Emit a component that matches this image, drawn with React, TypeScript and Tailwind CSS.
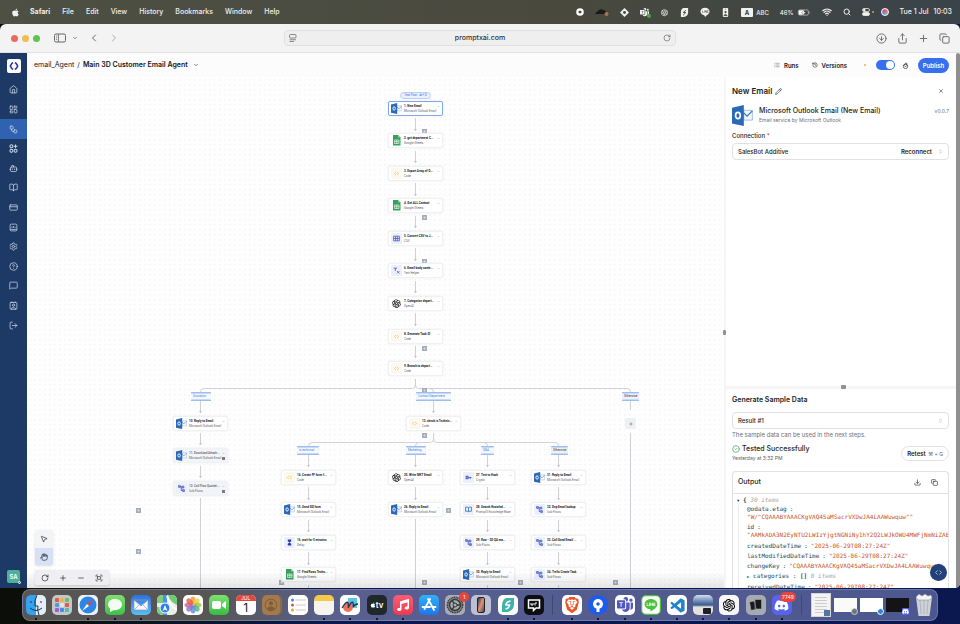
import type { ReactNode } from "react";
import {
  BookOpen,
  Bot,
  ChevronDown,
  ChevronLeft,
  ChevronRight,
  ChevronsUpDown,
  CircleArrowDown,
  CircleCheck,
  CircleHelp,
  Code,
  Contact,
  Copy,
  CreditCard,
  Download,
  Fullscreen,
  Hand,
  History,
  House,
  LayoutDashboard,
  List,
  LogOut,
  MessageSquare,
  Minus,
  MousePointer2,
  PanelLeft,
  Pencil,
  Plus,
  RotateCw,
  Search,
  Settings,
  Share,
  Wifi,
  Workflow,
  X,
} from "lucide-react";
import { FaApple, FaDiscord, FaLine, FaMusic } from "react-icons/fa";
import { FaBrave } from "react-icons/fa6";
import { AiOutlineOpenAI } from "react-icons/ai";
import { BsMicrosoftTeams } from "react-icons/bs";
import { BiLogoVisualStudio } from "react-icons/bi";

type IconKind =
  | "outlook"
  | "sheets"
  | "code"
  | "csv"
  | "text"
  | "openai"
  | "subflow"
  | "delay"
  | "crypto"
  | "book";

interface FlowNode {
  x: number;
  y: number;
  title: string;
  app: string;
  icon: IconKind;
  skipped?: boolean;
  selected?: boolean;
}

interface Branch {
  x: number;
  y: number;
  w: number;
  name: string;
  fallback?: boolean;
}

const OUTLOOK = "Microsoft Outlook Email";

const nodes: FlowNode[] = [
  { x: 361, y: 24, title: "1. New Email", app: OUTLOOK, icon: "outlook", selected: true },
  { x: 361, y: 56, title: "2. get department C...", app: "Google Sheets", icon: "sheets" },
  { x: 361, y: 89, title: "3. Export Array of D...", app: "Code", icon: "code" },
  { x: 361, y: 121, title: "4. Get ALL Contact", app: "Google Sheets", icon: "sheets" },
  { x: 361, y: 154, title: "5. Convert CSV to J...", app: "CSV", icon: "csv" },
  { x: 361, y: 186, title: "6. Email body conte...", app: "Text Helper", icon: "text" },
  { x: 361, y: 219, title: "7. Categorize depart...", app: "OpenAI", icon: "openai" },
  { x: 361, y: 252, title: "8. Generate Task ID", app: "Code", icon: "code" },
  { x: 361, y: 284, title: "9. Branch to depart...", app: "Code", icon: "code" },
  { x: 146, y: 339, title: "10. Reply to Email", app: OUTLOOK, icon: "outlook" },
  { x: 146, y: 371, title: "11. Download Attach...", app: OUTLOOK, icon: "outlook", skipped: true },
  { x: 146, y: 404, title: "12. Call Flow Quotati...", app: "Sub Flows", icon: "subflow", skipped: true },
  { x: 379, y: 339, title: "13. check is Technic...", app: "Code", icon: "code" },
  { x: 254, y: 393, title: "14. Create FF form f...", app: "Code", icon: "code" },
  { x: 254, y: 425, title: "15. Send GG form", app: OUTLOOK, icon: "outlook" },
  { x: 254, y: 458, title: "16. wait for 5 minutes", app: "Delay", icon: "delay" },
  { x: 254, y: 490, title: "17. Find Rows Techn...", app: "Google Sheets", icon: "sheets" },
  { x: 361, y: 393, title: "25. Write MKT Email", app: "OpenAI", icon: "openai" },
  { x: 361, y: 425, title: "26. Reply to Email", app: OUTLOOK, icon: "outlook" },
  { x: 433, y: 393, title: "27. Text to Hash", app: "Crypto", icon: "crypto" },
  { x: 433, y: 425, title: "28. Search Knowled...", app: "PromptX Knowledge Base", icon: "book" },
  { x: 433, y: 458, title: "29. flow - 3D QA ma...", app: "Sub Flows", icon: "subflow" },
  { x: 433, y: 490, title: "30. Reply to Email", app: OUTLOOK, icon: "outlook" },
  { x: 504, y: 393, title: "31. Reply to Email", app: OUTLOOK, icon: "outlook" },
  { x: 504, y: 425, title: "32. Dep Email lookup", app: "Sub Flows", icon: "subflow" },
  { x: 504, y: 458, title: "33. Call Send Email ...", app: "Sub Flows", icon: "subflow" },
  { x: 504, y: 490, title: "34. Trello Create Task", app: "Sub Flows", icon: "subflow" },
];

const branches: Branch[] = [
  { x: 164, y: 315, w: 20, name: "Quotation" },
  { x: 389, y: 315, w: 35, name: "Contact Department" },
  { x: 595, y: 315, w: 17, name: "Otherwise", fallback: true },
  { x: 270, y: 369, w: 22, name: "is technical" },
  { x: 379, y: 369, w: 20, name: "Marketing" },
  { x: 454, y: 369, w: 13, name: "Q&A" },
  { x: 524, y: 369, w: 17, name: "Otherwise", fallback: true },
];

// x, from, to: straight connectors that end in an arrow head
const arrows: [number, number, number][] = [
  [388, 41, 54], [388, 74, 86], [388, 106, 119], [388, 139, 151],
  [388, 171, 184], [388, 204, 216], [388, 236, 249], [388, 269, 281],
  [173, 324, 336], [173, 356, 368], [173, 389, 401],
  [406, 324, 336],
  [281, 378, 390], [281, 410, 423], [281, 443, 455], [281, 475, 488],
  [388, 378, 390], [388, 410, 423],
  [460, 378, 390], [460, 410, 423], [460, 443, 455], [460, 475, 488],
  [531, 378, 390], [531, 410, 423], [531, 443, 455], [531, 475, 488],
];

const lines: [number, number, number][] = [
  [173, 421, 600], [388, 442, 600], [603, 324, 333], [603, 356, 600],
  [281, 508, 600], [460, 508, 600], [531, 508, 600],
];

// small plus handles for adding notes
const addHandles: [number, number][] = [
  [395, 52], [395, 138], [395, 182], [395, 269], [395, 311], [395, 356],
  [419, 431], [109, 431], [109, 472], [395, 503], [491, 503], [586, 503], [252, 503],
];

const AppsIcon = ({ className }: { className: string }) => (
  <svg viewBox="0 0 24 24" className={className} fill="none" stroke="currentColor" strokeWidth="2.800">
    <circle cx="6.500" cy="6" r="4" />
    <circle cx="6.500" cy="18" r="4" />
    <circle cx="17.500" cy="18" r="4" />
    <path d="M17.500 1v10M12.500 6h10" />
  </svg>
);

const UsageIcon = ({ className }: { className: string }) => (
  <svg viewBox="0 0 24 24" className={className} fill="none" stroke="currentColor" strokeWidth="2">
    <rect x="3" y="3" width="18" height="18" rx="3" />
    <path d="M3 17h18M8 13V9M12 13V8M16 13v-3" />
  </svg>
);

const sideItems = [
  { label: "Home", Icon: House },
  { label: "Dashboard", Icon: LayoutDashboard },
  { label: "Flows", Icon: Workflow, active: true },
  { label: "Apps", Icon: AppsIcon },
  { label: "Agents", Icon: Bot },
  { label: "Knowledge", Icon: BookOpen },
  { label: "Billing", Icon: CreditCard },
  { label: "Usage", Icon: UsageIcon },
  { label: "Settings", Icon: Settings },
  { label: "Help", Icon: CircleHelp },
  { label: "Feedback", Icon: MessageSquare },
  { label: "Account", Icon: Contact },
  { label: "Log out", Icon: LogOut },
];

const OutlookIcon = ({ className }: { className: string }) => (
  <svg viewBox="0 0 32 32" className={className}>
    <path d="M18 8h13v15H18z" fill="#f4f8fd" stroke="#6f9fd8" strokeWidth="1" />
    <path d="M18 12l5 5 8-8" fill="none" stroke="#2f6fbd" strokeWidth="1.600" />
    <path d="M0 4l18-4v32L0 28z" fill="#2a68b8" />
    <ellipse cx="9" cy="16" rx="3.600" ry="4.800" fill="none" stroke="#fff" strokeWidth="2.600" />
  </svg>
);

const NodeIcon = ({ kind }: { kind: IconKind }) => {
  if (kind === "outlook") return <OutlookIcon className="size-[11px] shrink-0" />;
  if (kind === "openai") return <AiOutlineOpenAI className="size-[11px] shrink-0 text-black" />;
  if (kind === "sheets")
    return (
      <svg viewBox="0 0 11 11" className="size-[11px] shrink-0">
        <path d="M2 0h5l2.500 2.500V10.500H2z" fill="#36a15a" />
        <path d="M7 0l2.500 2.500H7z" fill="#8ed1a5" />
        <path d="M3.500 5h4.500v3.500H3.500zM3.500 6.700H8M5.700 5v3.500" fill="none" stroke="#e8f6ec" strokeWidth=".7" />
      </svg>
    );
  if (kind === "code")
    return (
      <span className="flex size-[11px] shrink-0 items-center justify-center rounded-[1px] bg-[#fdf8ec]">
        <Code className="size-[5px] text-[#e8b45c]" strokeWidth={3} />
      </span>
    );
  return (
    <span className="flex size-[11px] shrink-0 items-center justify-center rounded-[1px] bg-[#edf0fb]">
      <svg viewBox="0 0 12 12" className="size-[7px]" fill="none" stroke="#5267c9" strokeWidth="1.500">
        {kind === "csv" && <path d="M1 2h10v8H1zM1 6h10M4.500 2v8M7.500 2v8" />}
        {kind === "text" && <path d="M1 2h6M4 2v5M7 7l4 4M11 7l-4 4" />}
        {kind === "subflow" && (
          <path d="M1 1h3v3H1zM7 2h3v3H7zM8 8h3v3H8zM4 3h3M5.500 3v6.500H8" fill="#5267c9" fillOpacity=".5" />
        )}
        {kind === "delay" && <path d="M3 1h6v3L6 6 3 4zM6 6l3 2v3H3V8z" fill="#2b3fb0" stroke="none" />}
        {kind === "crypto" && <path d="M6 6h5M9 6v2M2 4h3v4H2z" strokeWidth="2" />}
        {kind === "book" && <path d="M1 2h4l1 1 1-1h4v7H7L6 10 5 9H1zM6 3v7" stroke="#3b7cb8" />}
      </svg>
    </span>
  );
};

const NodeCard = ({ node }: { node: FlowNode }) => (
  <div
    className={`absolute flex h-[15px] w-[55px] items-center gap-[2px] rounded-[2px] border pl-[2px] shadow-[0_0_2px_#e6e8ec] ${
      node.selected ? "border-[#7fa7f4]" : "border-[#f0f1f4]"
    } ${node.skipped ? "bg-[#f3f4f7] text-[#70747c]" : "bg-white text-[#15171c]"}`}
    style={{ left: node.x, top: node.y }}
  >
    <NodeIcon kind={node.icon} />
    <div className="w-[31px] font-[Roboto,sans-serif] text-[3px] leading-[5px] whitespace-nowrap">
      <p className="font-bold">{node.title}</p>
      <p className="text-[#62666e]">{node.app}</p>
    </div>
    <ChevronDown className="mb-[5px] size-[3px] shrink-0 text-[#777]" />
    {node.skipped && <span className="absolute right-[2px] bottom-[2px] size-[3px] bg-[#777b83]" />}
  </div>
);

const BranchLabel = ({ branch }: { branch: Branch }) => (
  <div
    className="absolute flex h-[9px] items-center justify-center border-y border-[#9dbff0] bg-[#edf4fd] py-px"
    style={{ left: branch.x, top: branch.y, width: branch.w }}
  >
    <span
      className={`w-full rounded-[2px] border-y border-[#c6daf7] pl-[2px] font-[Roboto,sans-serif] text-[3px] leading-[5px] whitespace-nowrap ${
        branch.fallback ? "bg-[#eef1f5] text-[#30343b]" : "bg-[#f5f9ff] text-[#4580dc]"
      }`}
    >
      {branch.name}
    </span>
  </div>
);

const FlowCanvas = () => (
  <main className="relative min-w-0 flex-1 overflow-hidden bg-[#fefefe] bg-[radial-gradient(#f7f7f9_1px,transparent_1px)] bg-[size:5px_5px]">
    <svg className="absolute inset-0 size-full" fill="none" stroke="#cfd1d6" strokeWidth="1">
      {arrows.map(([x, from, to]) => (
        <g key={`${x}-${from}`}>
          <path d={`M${x + 0.5} ${from}V${to}`} />
          <path d={`M${x - 1} ${to - 2}h3l-1.500 2z`} fill="#bfc2c8" stroke="none" />
        </g>
      ))}
      {lines.map(([x, from, to]) => (
        <path key={`${x}-${from}`} d={`M${x + 0.5} ${from}V${to}`} />
      ))}
      <path d="M388.500 302v6q0 3.500-3 3.500H177q-3.500 0-3.500 3.500M388.500 308q0 3.500 3 3.500H600q3.500 0 3.500 3.500M403 311.500q3.500 0 3.500 3.500" />
      <path d="M406.500 356v6q0 3.500-3 3.500H285q-3.500 0-3.500 3.500M406.500 362q0 3.500 3 3.500H528q3.500 0 3.500 3.500M392 365.500q-3.500 0-3.500 3.500M457 365.500q3.500 0 3.500 3.500" />
    </svg>

    {addHandles.map(([x, y]) => (
      <button
        key={`${x}-${y}`}
        aria-label="Add note"
        className="absolute flex size-[5px] items-center justify-center bg-[#a5adba] text-white"
        style={{ left: x, top: y }}
      >
        <Plus className="size-[3px]" strokeWidth={3} />
      </button>
    ))}

    <button className="absolute top-[15px] left-[373px] h-[7px] w-[31px] rounded-full border border-[#b7cdf7] bg-[#e9f1fe] font-[Roboto,sans-serif] text-[3px] leading-[5px] whitespace-nowrap text-[#3b73e0]">
      Test Flow &nbsp;⌘ + D
    </button>
    {nodes.map((node) => (
      <NodeCard key={node.title} node={node} />
    ))}
    {branches.map((branch) => (
      <BranchLabel key={`${branch.x}-${branch.name}`} branch={branch} />
    ))}
    <button
      aria-label="Add step"
      className="absolute top-[341px] left-[598px] flex size-[11px] items-center justify-center rounded-[1px] bg-[#eff0f2] text-[#5d6168]"
    >
      <Plus className="size-[4px]" strokeWidth={3} />
    </button>

    <div className="absolute bottom-0 h-4 w-full bg-linear-to-b from-transparent to-black/10" />
    <div className="absolute bottom-[3px] left-2 flex flex-col items-start gap-[5px] text-[#24272d]">
      <div className="flex flex-col overflow-hidden rounded-[2px] bg-[#f3f4f6] shadow-sm">
        <button aria-label="Select" className="flex h-[18px] w-[18px] items-center justify-center">
          <MousePointer2 className="size-2" />
        </button>
        <button aria-label="Pan" className="flex h-[17px] w-[18px] items-center justify-center bg-[#d6e1f6]">
          <Hand className="size-2" />
        </button>
      </div>
      <div className="flex h-[15px] rounded-[2px] bg-[#efeff1] px-px shadow-sm">
        {[RotateCw, Plus, Minus, Fullscreen].map((Icon, i) => (
          <button
            key={i}
            aria-label={["Reset", "Zoom in", "Zoom out", "Fit view"][i]}
            className="flex w-[18px] items-center justify-center"
          >
            <Icon className="size-2" />
          </button>
        ))}
      </div>
    </div>
  </main>
);

const MenuBar = () => (
  <header className="flex h-6 shrink-0 items-center justify-between pr-2 pl-[11px] text-[7px] font-medium text-[#f1f1ee]">
    <div className="flex items-center gap-[10px]">
      <FaApple className="size-[9px]" />
      <nav className="flex items-center gap-3">
        <b className="font-bold">Safari</b>
        {["File", "Edit", "View", "History", "Bookmarks", "Window", "Help"].map((item) => (
          <button key={item}>{item}</button>
        ))}
      </nav>
    </div>
    <div className="flex items-center gap-[11px]">
      <svg viewBox="0 0 8 8" className="size-2">
        <circle cx="4" cy="4" r="3.800" fill="#fff" />
        <rect x="2.700" y="2.700" width="2.600" height="2.600" rx=".6" fill="#45463d" />
      </svg>
      <svg viewBox="0 0 14 8" className="h-2 w-[14px]">
        <path d="M0 6q1-2 3-3 2-3 5-1 3 0 4 4z" fill="#1b1b19" />
        <circle cx="11.500" cy="6" r="2" fill="#a9744f" />
      </svg>
      <svg viewBox="0 0 10 10" className="size-[9px]" fill="#f1f1ee">
        <path d="M5 0l5 5-5 5-5-5z" />
        <circle cx="5" cy="5" r="1.600" fill="#45463d" />
      </svg>
      <span className="relative">
        <BsMicrosoftTeams className="size-[9px]" />
        <i className="absolute right-[-2px] bottom-[-1px] size-1 rounded-full bg-[#3fae42]" />
      </span>
      <AiOutlineOpenAI className="size-[9px]" />
      <svg viewBox="0 0 10 10" className="size-[9px]">
        <path d="M4 0h5v5q0 4-5 5H1V5q0-4 3-5z" fill="#f1f1ee" />
        <path d="M6.500 2.500L3.500 5l3 0-3 3" fill="none" stroke="#45463d" />
      </svg>
      <svg viewBox="0 0 20 20" className="size-[10px]" fill="#f1f1ee">
        <ellipse cx="10" cy="9" rx="9" ry="7.500" />
        <path d="M8 15l9-2-7 7z" />
        <path d="M5 7v4h2M9 7v4M11 11V7l2 4V7M17 7h-2v4h2" fill="none" stroke="#45463d" />
      </svg>
      <svg viewBox="0 0 10 10" className="size-[9px]">
        <rect x="2" width="6" height="10" rx="1" fill="#f1f1ee" />
        <circle cx="5" cy="4.500" r="1.200" fill="#45463d" />
        <path d="M3 8.500q2-3 4 0zM4 1.200h2" fill="#45463d" stroke="#45463d" strokeWidth=".5" />
      </svg>
      <span className="flex items-center gap-[3px] text-[6px]">
        <b className="rounded-[1px] bg-[#f1f1ee] px-1 leading-[9px] text-[#333]">A</b>
        ABC
      </span>
      <span className="flex items-center gap-[3px] text-[6px]">
        46%
        <svg viewBox="0 0 14 8" className="h-[7px] w-[14px]">
          <rect x=".5" y="1" width="11.500" height="6" rx="1.500" fill="none" stroke="#aaa" />
          <rect x="1" y="1.500" width="6" height="5" rx="1" fill="#fff" />
          <path d="M8 0L4 4.500h2L5 8l4-4.500H7z" fill="#fff" stroke="#45463d" strokeWidth=".4" />
          <path d="M13 3v2" stroke="#aaa" />
        </svg>
      </span>
      <Wifi className="size-[10px]" strokeWidth={3} />
      <Search className="size-2" strokeWidth={3} />
      <span className="flex items-center gap-[2px]">
        <svg viewBox="0 0 16 16" className="size-2" fill="none" stroke="#f1f1ee" strokeWidth="1.500">
          <rect x="1" y="1" width="14" height="6" rx="3" />
          <rect x="1" y="9" width="14" height="6" rx="3" fill="#f1f1ee" />
          <circle cx="4.500" cy="4" r="2" fill="#f1f1ee" />
        </svg>
        <i className="size-[2px] rounded-full bg-[#e79b34]" />
      </span>
      <span className="-ml-1 size-2 rounded-full border border-white bg-[conic-gradient(#e14f72,#e98a3b,#5aa7e8,#8c6be0,#e14f72)]" />
      <time className="flex gap-[5px]">
        <span>Tue 1 Jul</span>
        <span>10:03</span>
      </time>
    </div>
  </header>
);

const BrowserBar = () => (
  <div className="flex h-[29px] shrink-0 items-center border-b border-[#e2e2e2] bg-[#f3f3f3] px-[10px] text-[#666]">
    <div className="flex flex-1 items-center">
      <div className="flex gap-1 pl-px">
        <i className="size-[7px] rounded-full bg-[#ea6a5e]" />
        <i className="size-[7px] rounded-full bg-[#f0be50]" />
        <i className="size-[7px] rounded-full bg-[#5fc454]" />
      </div>
      <svg viewBox="0 0 12 10" className="ml-[14px] h-[10px] w-3" fill="none" stroke="#666">
        <rect x=".5" y="1" width="11" height="8" rx="1.500" />
        <path d="M4.500 1v8M2 3h1.200M2 4.800h1.200M2 6.600h1.200" strokeWidth=".8" />
      </svg>
      <ChevronDown className="ml-[6px] size-[6px]" strokeWidth={3} />
      <ChevronLeft className="ml-[10px] size-3" />
      <ChevronRight className="ml-2 size-3 text-[#aaa]" />
    </div>
    <div className="flex h-4 w-5/12 items-center rounded-[4px] border border-[#e0e0e0] bg-[#efefef] px-1">
      <svg viewBox="0 0 16 16" className="size-2" fill="none" stroke="#666" strokeWidth="1.500">
        <rect x="1" y="1" width="13" height="7" rx="2" />
        <path d="M1 11.500h13M1 15h9" />
      </svg>
      <input
        aria-label="Address"
        defaultValue="promptxai.com"
        className="min-w-0 flex-1 text-center text-[7px] font-medium text-[#333] outline-none"
      />
      <RotateCw className="size-2" />
    </div>
    <div className="flex flex-1 items-center justify-end gap-[10px]">
      <CircleArrowDown className="size-[11px]" />
      <Share className="size-[11px]" />
      <Plus className="size-[11px]" />
      <Copy className="size-[11px]" />
    </div>
  </div>
);

const Sidebar = () => (
  <aside className="flex w-[27px] shrink-0 flex-col items-center bg-[#1d3a66] pt-[6px] pb-[5px] text-[#c9d5e8]">
    <span className="flex size-[14px] items-center justify-center rounded-[2px] bg-white">
      <svg viewBox="0 0 12 12" className="size-[10px]" fill="none" stroke="#2635b8" strokeWidth="1.800">
        <path d="M5 2L3.500 2.800 1.500 6l2 3.200L5 10M7 2l1.500.8 2 3.200-2 3.200L7 10" />
      </svg>
    </span>
    <nav className="mt-[7px] flex h-[255px] w-full flex-col">
      {sideItems.map(({ label, Icon, active }) => (
        <a
          key={label}
          href="#"
          aria-label={label}
          className={`flex flex-1 items-center justify-center ${active ? "bg-[#2f62b0]" : ""}`}
        >
          <Icon className="size-[9px]" />
        </a>
      ))}
    </nav>
    <span className="relative mt-auto flex size-[13px] items-center justify-center rounded-[2px] bg-[#4db09a] text-[6px] font-semibold text-white">
      SA
      <i className="absolute -right-px -bottom-px size-[3px] rounded-full border border-white bg-[#3a8f5c]" />
    </span>
  </aside>
);

const FlowHeader = () => (
  <header className="flex h-6 shrink-0 items-center justify-between bg-[#fcfcfc] px-[7px] text-[6px] text-[#15171c]">
    <div className="flex items-center gap-[3px] text-[7px]">
      <a href="#">email_Agent</a>
      <span>/</span>
      <h1 className="font-semibold">Main 3D Customer Email Agent</h1>
      <ChevronDown className="ml-[2px] size-[6px]" />
    </div>
    <div className="flex items-center font-semibold">
      <button className="flex items-center gap-1">
        <List className="size-[6px] text-[#666]" />
        Runs
      </button>
      <button className="ml-[13px] flex items-center gap-1">
        <History className="size-[6px]" />
        Versions
      </button>
      <i className="ml-[17px] size-[2px] rounded-full bg-[#f0b13c]" />
      <input
        type="checkbox"
        aria-label="Flow enabled"
        defaultChecked
        className="ml-[10px] flex h-[10px] w-[19px] appearance-none items-center justify-end rounded-full bg-[#3670ee] px-px before:size-2 before:rounded-full before:bg-white"
      />
      <svg viewBox="0 0 14 14" className="ml-[7px] size-[7px]" fill="none" stroke="#333" strokeWidth="1.400">
        <circle cx="7" cy="9" r="4.300" />
        <path d="M2 7l3-1 2-4 3 1-1 3 3 1M5.500 9h3" />
      </svg>
      <button className="ml-[9px] h-[15px] w-[31px] rounded-full bg-[#3670ee] text-white">Publish</button>
    </div>
  </header>
);

const JsonRow = ({ name, value, below }: { name: string; value: string; below?: boolean }) => (
  <div className={below ? "mb-[2px] leading-[8px]" : "leading-[10px]"}>
    <span className="mr-[3px] text-[#1d4b57]">{name}</span>
    <span className="mr-[3px] text-[#1d4b57]">:</span>
    <span className={`text-[#cb5425] ${below ? "block" : ""}`}>"{value}"</span>
  </div>
);

const OutputBox = () => (
  <section className="mt-2 flex min-h-0 flex-1 flex-col overflow-hidden rounded-t-[4px] border border-b-0 border-[#dfe1e5]">
    <div className="flex h-[22px] shrink-0 items-center justify-between border-b border-[#dfe1e5] pr-[10px] pl-[5px]">
      <h3 className="text-[7px] font-medium">Output</h3>
      <div className="flex gap-[10px]">
        <button aria-label="Download">
          <Download className="size-[7px]" />
        </button>
        <button aria-label="Copy">
          <Copy className="size-[7px]" />
        </button>
      </div>
    </div>
    <div className="overflow-hidden pl-1 font-['DejaVu_Sans_Mono',monospace] text-[6px] whitespace-nowrap">
      <p className="pt-px leading-[9px] text-[#1d4b57]">
        <span className="text-[4px]">▼</span> <b>{"{"}</b> <i className="text-[#a3a3a3]">30 items</i>
      </p>
      <div className="ml-px border-l border-[#ececec] pl-2">
        <JsonRow below name="@odata.etag" value={'W/"CQAAABYAAACKgVAQ45aMSacrVXDwJA4LAAWuwquw"'} />
        <JsonRow below name="id" value="AAMkADA3N2EyNTU2LWIzYjgtNGNiNy1hY2Q2LWJkOWU4MWFjNmNiZABGAAAA" />
        <JsonRow name="createdDateTime" value="2025-06-29T08:27:24Z" />
        <JsonRow name="lastModifiedDateTime" value="2025-06-29T08:27:24Z" />
        <JsonRow name="changeKey" value="CQAAABYAAACKgVAQ45aMSacrVXDwJA4LAAWuwquw" />
        <p className="leading-[10px] text-[#1d4b57]">
          <span className="text-[4px] text-[#2f8a91]">▶</span> categories : <b>[]</b>{" "}
          <i className="text-[#a3a3a3]">0 items</i>
        </p>
        <JsonRow name="receivedDateTime" value="2025-06-29T08:27:24Z" />
      </div>
    </div>
  </section>
);

const StepPanel = () => (
  <aside className="relative flex w-[232px] shrink-0 flex-col border-l-2 border-[#f5f5f6] bg-white text-[6px] text-[#1b1d22]">
    <span className="absolute top-[253px] -left-[3px] h-[5px] w-[3px] rounded-[1px] bg-[#8d929a]" />
    <section className="h-[309px] shrink-0 pt-2 pr-[7px] pl-[6px]">
      <div className="flex items-center">
        <h2 className="text-[8px] leading-[12px] font-semibold">New Email</h2>
        <button aria-label="Rename step" className="ml-[3px]">
          <Pencil className="size-[7px]" />
        </button>
        <button aria-label="Close panel" className="mr-[5px] ml-auto">
          <X className="size-[6px]" />
        </button>
      </div>
      <div className="mt-2 flex items-center gap-[6px]">
        <OutlookIcon className="size-[21px]" />
        <div className="flex-1">
          <p className="text-[7px] leading-[10px] font-medium">Microsoft Outlook Email (New Email)</p>
          <p className="text-[5px] leading-[9px] text-[#6b7079]">Email service by Microsoft Outlook</p>
        </div>
        <span className="mb-2 text-[5px] text-[#6b7079]">v0.0.7</span>
      </div>
      <label htmlFor="connection" className="mt-[5px] block leading-[10px] font-medium">
        Connection <span className="text-[#d93a3a]">*</span>
      </label>
      <div className="mt-[2px] flex h-[17px] items-center rounded-[4px] border border-[#dfe1e5] px-[5px]">
        <select id="connection" className="min-w-0 flex-1 appearance-none font-medium">
          <option>SalesBot Additive</option>
        </select>
        <button className="font-semibold">Reconnect</button>
        <ChevronsUpDown className="ml-[6px] size-[5px] text-[#888]" />
      </div>
    </section>

    <div className="relative h-[3px] shrink-0 bg-[#f6f6f7]">
      <span className="absolute top-[-1px] left-1/2 h-[4px] w-[5px] rounded-[1px] bg-[#8d929a]" />
    </div>

    <section className="flex min-h-0 flex-1 flex-col pt-[6px] pr-[7px] pl-[6px]">
      <h2 className="text-[7px] leading-[10px] font-semibold">Generate Sample Data</h2>
      <div className="mt-[7px] flex h-[17px] shrink-0 items-center rounded-[4px] border border-[#dfe1e5] px-[5px]">
        <select aria-label="Sample result" className="min-w-0 flex-1 appearance-none font-medium">
          <option>Result #1</option>
        </select>
        <ChevronsUpDown className="size-[5px] text-[#888]" />
      </div>
      <p className="mt-px leading-[9px] text-[#6b7079]">The sample data can be used in the next steps.</p>
      <div className="mt-[5px] flex items-center justify-between">
        <div>
          <p className="flex items-center gap-[2px] text-[7px] leading-[10px] font-medium">
            <CircleCheck className="size-2 text-[#3a9b52]" />
            Tested Successfully
          </p>
          <p className="text-[5px] leading-[9px] text-[#5b6069]">Yesterday at 3:32 PM</p>
        </div>
        <button className="h-[15px] rounded-full border border-[#dfe1e5] px-[5px] font-semibold">
          Retest <span className="ml-px text-[5px] font-normal text-[#5b6069]">⌘ + G</span>
        </button>
      </div>
      <OutputBox />
    </section>
    <button
      aria-label="Open data viewer"
      className="absolute right-[9px] bottom-[7px] flex size-[17px] items-center justify-center rounded-full bg-[#22407a] text-white"
    >
      <Code className="size-[7px]" />
    </button>
  </aside>
);

const DockApp = ({
  label,
  className,
  running,
  badge,
  children,
}: {
  label: string;
  className: string;
  running?: boolean;
  badge?: string;
  children?: ReactNode;
}) => (
  <button aria-label={label} className="relative py-[2px]">
    <span className={`flex size-5 items-center justify-center overflow-hidden rounded-[5px] ${className}`}>
      {children}
    </span>
    {badge && (
      <span className="absolute -top-px -right-[4px] min-w-[10px] rounded-full bg-[#e6453c] px-[2px] text-[5px] leading-[10px] text-white">
        {badge}
      </span>
    )}
    {running && <i className="absolute -bottom-[3px] left-[9px] size-[2px] rounded-full bg-black" />}
  </button>
);

const Divider = () => <span className="ml-[2px] h-5 w-[4px] border-l border-[#3f4774]" />;

const petals = ["#f0a13a", "#f3cf45", "#a5c94b", "#5fb58b", "#5b9bd8", "#8b78c9", "#c66bab", "#e5604c"];
const tiles = ["#e5573f", "#efb14a", "#6bc25b", "#4d9be8", "#e4e4e4", "#e8564c", "#a55bd0", "#3f8ee5", "#4bc1b0"];

const Dock = () => (
  <footer className="mx-[22px] mt-px mb-[3px] flex h-8 shrink-0 items-center rounded-[8px] border border-white/20 bg-linear-to-r from-[#575655] from-20% via-[#596090] via-35% to-[#4c5790] px-[3px]">
    <div className="flex flex-1 items-center justify-between">
      <DockApp label="Finder" className="bg-linear-to-r from-[#33a3f2] from-50% to-[#e3eef8] to-50%" running>
        <svg viewBox="0 0 20 20" className="size-5" fill="none" stroke="#1d3550">
          <path d="M11 0q-3 6-2 11h3q-1 4 1 9M5 6v2M15 6v2M4 13q6 5 12 0" />
        </svg>
      </DockApp>
      <DockApp label="Launchpad" className="bg-[#c4c6c9]">
        <span className="grid grid-cols-3 gap-px">
          {tiles.map((color) => (
            <i key={color} className="size-1 rounded-[1px]" style={{ background: color }} />
          ))}
        </span>
      </DockApp>
      <DockApp label="Safari" className="bg-[#eef1f4]" running>
        <svg viewBox="0 0 20 20" className="size-5">
          <circle cx="10" cy="10" r="8.500" fill="#2c86e6" />
          <path d="M16 4l-5 7-2-2z" fill="#e8453c" />
          <path d="M4 16l5-7 2 2z" fill="#fff" />
        </svg>
      </DockApp>
      <DockApp label="Messages" className="bg-linear-to-b from-[#7be06f] to-[#3cc14a]" running>
        <svg viewBox="0 0 20 20" className="size-5" fill="#f4fbf3">
          <ellipse cx="10" cy="9.500" rx="7" ry="5.800" />
          <path d="M5 12l0 5 4-2z" />
        </svg>
      </DockApp>
      <DockApp label="Mail" className="bg-linear-to-b from-[#2f6fe0] to-[#59bff5]" running>
        <svg viewBox="0 0 20 20" className="size-5" fill="#f5f7fa" stroke="#8d9bb0" strokeWidth=".7">
          <path d="M3 5h14v10H3zM3 5l7 6 7-6M3 15l5-5M17 15l-5-5" />
        </svg>
      </DockApp>
      <DockApp label="Maps" className="bg-[#eaeee6]">
        <svg viewBox="0 0 20 20" className="size-5">
          <path d="M0 0h6v8H0zM0 12h6v8H0z" fill="#7dce78" />
          <path d="M6 0h4v20H6z" fill="#4d8ff0" />
          <path d="M11 0q2 7 9 10V0z" fill="#6fca72" />
          <path d="M10 1q3 10 10 14" fill="none" stroke="#fff" strokeWidth="2" />
          <circle cx="8" cy="13" r="5" fill="#2f7ff0" stroke="#fff" />
          <path d="M8 10l2.500 6L8 14.500 5.500 16z" fill="#fff" />
        </svg>
      </DockApp>
      <DockApp label="Photos" className="bg-white">
        <svg viewBox="0 0 20 20" className="size-5">
          {petals.map((color, i) => (
            <ellipse key={color} cx="10" cy="5.500" rx="2.600" ry="4" fill={color} opacity=".85" transform={`rotate(${i * 45} 10 10)`} />
          ))}
        </svg>
      </DockApp>
      <DockApp label="FaceTime" className="bg-linear-to-b from-[#7be06f] to-[#35bd43]">
        <svg viewBox="0 0 20 20" className="size-5" fill="#fff">
          <rect x="3" y="6" width="9" height="8" rx="2" />
          <path d="M13 9l4-3v8l-4-3z" />
        </svg>
      </DockApp>
      <DockApp label="Calendar" className="flex-col bg-white">
        <span className="w-full bg-[#e2483d] text-[5px] leading-[6px] text-white">JUL</span>
        <span className="flex-1 text-[12px] leading-[14px] text-[#222]">1</span>
      </DockApp>
      <DockApp label="Contacts" className="border-r-2 border-[#8d6a42] bg-[#a27a4c]">
        <svg viewBox="0 0 20 20" className="size-5" fill="#7f5c34">
          <circle cx="10" cy="10" r="6.500" fill="none" stroke="#7f5c34" />
          <circle cx="10" cy="8" r="2.300" />
          <path d="M5.500 14q4.500-5 9 0-4.500 4-9 0z" />
        </svg>
      </DockApp>
      <DockApp label="Reminders" className="bg-white">
        <svg viewBox="0 0 20 20" className="size-5" stroke="#bbb" strokeWidth=".8">
          <path d="M7.500 5H18M7.500 10H18M7.500 15H18" />
          <g stroke="none">
            <circle cx="4.500" cy="5" r="1.500" fill="#3c82f0" />
            <circle cx="4.500" cy="10" r="1.500" fill="#e8503e" />
            <circle cx="4.500" cy="15" r="1.500" fill="#ef9a38" />
          </g>
        </svg>
      </DockApp>
      <DockApp label="Notes" className="bg-linear-to-b from-[#f5ca4b] from-30% to-[#f5f4ee] to-30%" running />
      <DockApp label="Freeform" className="bg-white" running>
        <svg viewBox="0 0 20 20" className="size-5">
          <path d="M8 3h9v10H8z" fill="#5fc3e6" />
          <circle cx="8" cy="12" r="5" fill="#ee7257" />
          <path d="M2 13Q7 5 8 8t0 5q4-8 5-5t0 4q2-3 5-3" fill="none" stroke="#1c3557" strokeWidth="1.300" />
        </svg>
      </DockApp>
      <DockApp label="TV" className="bg-[#20282a] text-[8px] font-semibold text-white" running>
        <FaApple className="size-[6px]" />
        tv
      </DockApp>
      <DockApp label="Music" className="bg-linear-to-b from-[#fb5c74] to-[#ec3a52] text-white" running>
        <FaMusic className="size-3" />
      </DockApp>
      <DockApp label="App Store" className="bg-linear-to-b from-[#2fb2f6] to-[#2374ea] text-white">
        <svg viewBox="0 0 20 20" className="size-5" fill="none" stroke="#fff" strokeWidth="1.800" strokeLinecap="round">
          <path d="M11 4L5.500 14M9 4l6 11M3.500 12h7.500M14 12h2.500" />
        </svg>
      </DockApp>
      <DockApp label="System Settings" className="bg-[#a9acb0]" badge="1">
        <svg viewBox="0 0 20 20" className="size-5" fill="none" stroke="#35383b">
          <circle cx="10" cy="10" r="7.500" strokeWidth="1.800" strokeDasharray="1.200 .5" />
          <circle cx="10" cy="10" r="5.500" strokeWidth="1.500" />
          <circle cx="10" cy="10" r="2" />
          <path d="M12 10h4M9 8.500L7 5M9 11.500L7 15" strokeWidth="1.500" />
        </svg>
      </DockApp>
      <DockApp label="iPhone Mirroring" className="bg-[#bdc0d2]">
        <span className="h-4 w-2 rounded-[2px] border border-[#222] bg-linear-to-br from-[#263b57] via-[#eb8e73] to-[#205265]" />
      </DockApp>
      <DockApp label="Surfshark" className="bg-white" running>
        <svg viewBox="0 0 20 20" className="size-5">
          <path d="M8 3h8v6q0 7-7 8H4v-6q0-6 4-8z" fill="#3fb2ac" />
          <path d="M12.500 6Q8 7 8 10h3.500q0 3-4 4" fill="none" stroke="#fff" strokeWidth="1.600" />
        </svg>
      </DockApp>
      <DockApp label="Chat" className="bg-[#0d0f12]" running>
        <svg viewBox="0 0 20 20" className="size-5" fill="none" stroke="#fff" strokeWidth="1.500">
          <path d="M4.500 5h11v8H12l-2.500 2.500V13h-5z" />
          <path d="M7 8v2h2V8M11 10.500V8h2" strokeWidth="1" />
        </svg>
      </DockApp>
      <Divider />
      <DockApp label="Brave" className="bg-white text-[#ef5227]" running>
        <FaBrave className="size-4" />
      </DockApp>
      <DockApp label="Password Manager" className="rounded-full bg-[#1e5bf0]" running>
        <svg viewBox="0 0 20 20" className="size-5">
          <circle cx="10" cy="9" r="5" fill="#fff" />
          <path d="M8.500 12h3v5h-3z" fill="#fff" />
          <circle cx="10" cy="9" r="1.800" fill="#1e5bf0" />
        </svg>
      </DockApp>
      <DockApp label="Teams" className="bg-white text-[#5357bd]" running>
        <BsMicrosoftTeams className="size-4" />
      </DockApp>
      <DockApp label="LINE" className="bg-[#4cc23b] text-white" running>
        <FaLine className="size-5" />
      </DockApp>
      <DockApp label="VS Code" className="bg-white text-[#2583cc]" running>
        <BiLogoVisualStudio className="size-[17px]" />
      </DockApp>
      <DockApp label="Preview" className="bg-linear-to-b from-[#d3e1f2] via-[#38598d] via-50% to-[#e3e0dd] to-60%" running>
        <span className="mt-3 ml-2 h-[6px] w-2 rounded-[1px] bg-[#1f2124]" />
      </DockApp>
      <DockApp label="ChatGPT" className="bg-[#f7f7f7] text-black" running>
        <AiOutlineOpenAI className="size-4" />
      </DockApp>
      <DockApp label="Screens" className="bg-[#a6abb2]" running>
        <svg viewBox="0 0 20 20" className="size-5" fill="#17191b" stroke="#a6abb2" strokeWidth=".6">
          <path d="M3.500 7l5-1 1.500 8.500-5 .8zM9 4.500h6.500V14H9z" />
        </svg>
      </DockApp>
      <DockApp label="Discord" className="bg-[#5663ea] text-white" badge="7749" running>
        <FaDiscord className="size-[15px]" />
      </DockApp>
    </div>
    <span className="mr-[9px] ml-[9px] h-5 w-px bg-[#3f4774]" />
    <div className="flex items-center gap-[3px]">
      <button aria-label="Document" className="relative h-6 w-5 border border-[#d5d5d5] bg-[#f4f4f2] p-[3px]">
        <span className="block h-full bg-[repeating-linear-gradient(#ccc_0_1px,transparent_1px_3px)]" />
        <i className="absolute right-0 bottom-0 size-[6px] bg-[#50779f]" />
      </button>
      <button aria-label="Settings window" className="relative h-[14px] w-[23px] bg-[#fafafa]">
        <i className="absolute -right-px -bottom-[3px] size-[7px] rounded-full border border-[#ccc] bg-[#6f7379]" />
      </button>
      <button aria-label="Safari window" className="relative h-[14px] w-[23px] bg-white">
        <i className="absolute -right-px -bottom-[3px] size-[7px] rounded-full border border-white bg-[#2c86e6]" />
      </button>
      <button aria-label="Discord window" className="relative h-[14px] w-[23px] bg-[#141416]">
        <FaDiscord className="absolute right-0 -bottom-[3px] size-[7px] rounded-[1px] bg-[#5663ea] text-white" />
      </button>
      <button aria-label="Trash" className="ml-[2px]">
        <svg viewBox="0 0 20 24" className="h-6 w-5">
          <path d="M2 4h16l-2.500 19h-11z" fill="#cfd2d6" />
          <path d="M6 7l1 14M10 7v14M14 7l-1 14" stroke="#b2b6bc" />
          <path d="M2 4l3-3 3 2 3-2 3 2 3-1 1 3-3 2H4z" fill="#f5f5f5" stroke="#8c9096" strokeWidth=".6" />
        </svg>
      </button>
    </div>
  </footer>
);

export default function App() {
  return (
    <div className="flex h-screen flex-col overflow-hidden bg-linear-to-r from-[#0b0e09] from-5% to-[#0b1850] to-35% font-[Inter,'Liberation_Sans',sans-serif]">
      <div className="bg-linear-to-r from-[#4e5044] via-[#49493e] via-60% to-[#39434a]">
        <MenuBar />
      </div>
      <div className="flex min-h-0 flex-1 flex-col overflow-hidden rounded-t-[6px] rounded-br-[5px]">
        <BrowserBar />
        <div className="flex min-h-0 flex-1 bg-white">
          <Sidebar />
          <div className="flex min-w-0 flex-1 flex-col">
            <FlowHeader />
            <div className="flex min-h-0 flex-1">
              <FlowCanvas />
              <StepPanel />
            </div>
          </div>
          <div className="w-[4px] shrink-0 rounded-t-[2px] bg-[#8f8f8f]" />
        </div>
      </div>
      <Dock />
    </div>
  );
}
